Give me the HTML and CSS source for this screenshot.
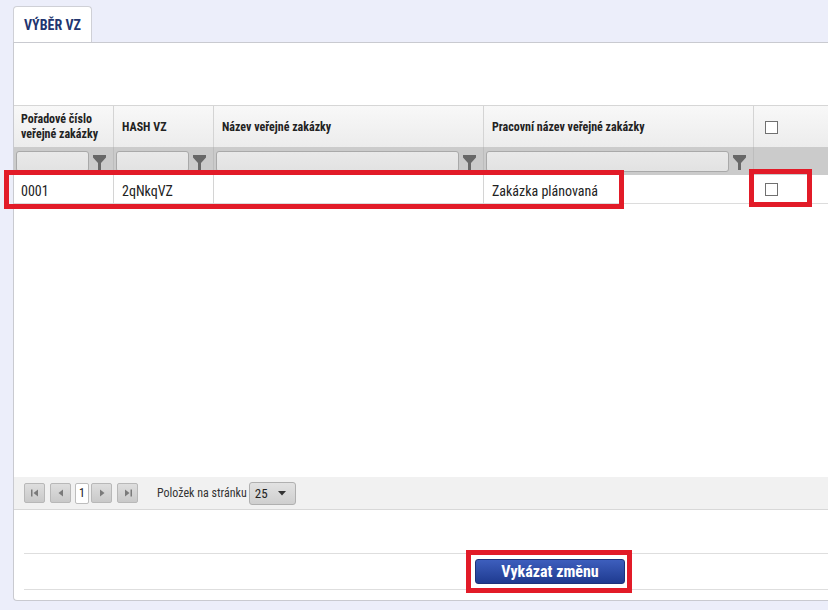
FILE: index.html
```html
<!DOCTYPE html>
<html lang="cs">
<head>
<meta charset="utf-8">
<title>Výběr VZ</title>
<link rel="stylesheet" href="styles.css">
</head>
<body>
<div class="page">
  <div class="tab">VÝBĚR VZ</div>
  <div class="panel">
    <div class="toolbar-space"></div>
    <div class="grid">
      <div class="cell head c-first">Pořadové číslo<br>veřejné zakázky</div>
      <div class="cell head">HASH VZ</div>
      <div class="cell head">Název veřejné zakázky</div>
      <div class="cell head">Pracovní název veřejné zakázky</div>
      <div class="cell head c-check"><span class="checkbox"></span></div>

      <div class="cell filter c-first"><span class="finput"></span><svg class="funnel" viewBox="0 0 13 15"><path d="M0 0H13V2.5L8 8V15H5V8L0 2.5Z"/></svg></div>
      <div class="cell filter"><span class="finput"></span><svg class="funnel" viewBox="0 0 13 15"><path d="M0 0H13V2.5L8 8V15H5V8L0 2.5Z"/></svg></div>
      <div class="cell filter"><span class="finput"></span><svg class="funnel" viewBox="0 0 13 15"><path d="M0 0H13V2.5L8 8V15H5V8L0 2.5Z"/></svg></div>
      <div class="cell filter"><span class="finput"></span><svg class="funnel" viewBox="0 0 13 15"><path d="M0 0H13V2.5L8 8V15H5V8L0 2.5Z"/></svg></div>
      <div class="cell filter c-check"></div>

      <div class="cell data c-first">0001</div>
      <div class="cell data">2qNkqVZ</div>
      <div class="cell data"></div>
      <div class="cell data">Zakázka plánovaná</div>
      <div class="cell data c-check"><span class="checkbox"></span></div>
    </div>
    <div class="grid-space"></div>
    <div class="pager">
      <span class="pbtn"><svg viewBox="0 0 10 10"><rect x="1" y="1.5" width="1.5" height="7"/><path d="M8 1.5V8.5L3.5 5Z"/></svg></span>
      <span class="pbtn"><svg viewBox="0 0 10 10"><path d="M7 1.5V8.5L2.5 5Z"/></svg></span>
      <span class="pnum">1</span>
      <span class="pbtn"><svg viewBox="0 0 10 10"><path d="M3 1.5V8.5L7.5 5Z"/></svg></span>
      <span class="pbtn pgap"><svg viewBox="0 0 10 10"><path d="M2 1.5V8.5L6.5 5Z"/><rect x="7.5" y="1.5" width="1.5" height="7"/></svg></span>
      <span class="plabel">Položek na stránku</span>
      <span class="pselect">25<svg viewBox="0 0 8 5"><path d="M0 0H8L4 4.5Z"/></svg></span>
    </div>
    <div class="actions">
      <button class="btn-primary" type="button">Vykázat změnu</button>
    </div>
  </div>

  <div class="mark mark-row"></div>
  <div class="mark mark-check"></div>
  <div class="mark mark-btn"></div>
</div>
</body>
</html>
```

FILE: styles.css
```css
html, body {
  margin: 0;
  padding: 0;
}
body {
  background: #eceefa;
  overflow: hidden;
  font-family: "Roboto Condensed", "Liberation Sans Narrow", "Arial Narrow", "DejaVu Sans Condensed", Roboto, sans-serif;
  color: #222;
}
.page {
  position: relative;
  width: 828px;
  height: 610px;
  padding: 6px 0 0 13px;
  box-sizing: border-box;
  overflow: hidden;
}
.tab {
  width: 79px;
  height: 36px;
  box-sizing: border-box;
  background: #fff;
  border: 1px solid #cfd0d6;
  border-bottom: none;
  border-radius: 4px 4px 0 0;
  color: #22356f;
  font-weight: bold;
  font-size: 14px;
  line-height: 36px;
  padding-left: 10px;
}
.panel {
  width: 1100px;
  background: #fff;
  border: 1px solid #c9cad0;
  border-right: none;
  border-radius: 0 0 0 4px;
  padding-bottom: 10px;
}
.toolbar-space {
  height: 62px;
}
.grid {
  display: grid;
  grid-template-columns: 99px 100px 270px 270px 120px;
  border-top: 1px solid #d6d6d6;
}
.cell {
  box-sizing: border-box;
  border-left: 1px solid #d4d4d4;
  display: flex;
  align-items: center;
  padding-left: 8px;
}
.c-first {
  border-left: none;
  padding-left: 7px;
}
.head {
  height: 41px;
  background: linear-gradient(#f8f8f8, #ececec);
  font-weight: bold;
  font-size: 12px;
  line-height: 15px;
  color: #222;
  padding-top: 1px;
}
.filter {
  height: 28px;
  background: #cbcbcb;
  border-left-color: #bdbdbd;
  padding: 0 7px 0 2px;
  gap: 4px;
}
.filter.c-first {
  padding-left: 2px;
}
.finput {
  flex: 1;
  height: 21px;
  box-sizing: border-box;
  border: 1px solid #a9a9a9;
  border-radius: 3px;
  background: linear-gradient(#e9e9e9, #e2e2e2);
}
.funnel {
  width: 13px;
  height: 15px;
  fill: #686868;
  flex: none;
  margin-top: 2px;
}
.data {
  height: 29px;
  border-bottom: 1px solid #dcdcdc;
  font-size: 14px;
  color: #222;
  background: #fff;
  padding-top: 3px;
}
.data.c-check {
  padding-top: 0;
}
.c-check {
  padding-left: 11px;
}
.checkbox {
  display: block;
  width: 13px;
  height: 13px;
  box-sizing: border-box;
  border: 1px solid #707070;
  background: #fff;
}
.grid-space {
  height: 273px;
}
.pager {
  height: 33px;
  box-sizing: border-box;
  background: #f1f1f1;
  border-bottom: 1px solid #d8d8d8;
  display: flex;
  align-items: center;
  padding-left: 10px;
}
.pbtn {
  width: 21px;
  height: 20px;
  box-sizing: border-box;
  border: 1px solid #b8b8b8;
  border-radius: 2px;
  background: linear-gradient(#dedede, #c9c9c9);
  display: flex;
  align-items: center;
  justify-content: center;
  margin-right: 5px;
}
.pbtn svg {
  width: 10px;
  height: 10px;
  fill: #7a7a7a;
}
.pnum {
  width: 14px;
  height: 21px;
  box-sizing: border-box;
  border: 1px solid #bdbdbd;
  border-radius: 2px;
  background: #fff;
  font-size: 12px;
  display: flex;
  align-items: center;
  justify-content: center;
  margin: 0 2px 0 -1px;
}
.pbtn.pgap {
  margin-right: 19px;
}
.plabel {
  font-size: 12px;
  color: #333;
  margin-right: 2px;
}
.pselect {
  width: 47px;
  height: 23px;
  box-sizing: border-box;
  border: 1px solid #b0b0b0;
  border-radius: 3px;
  background: linear-gradient(#e2e2e2, #cfcfcf);
  font-size: 13px;
  display: flex;
  align-items: center;
  justify-content: space-between;
  padding: 0 9px 0 5px;
}
.pselect svg {
  width: 8px;
  height: 5px;
  fill: #333;
}
.actions {
  margin: 43px 0 0 10px;
  border-top: 1px solid #dedede;
  border-bottom: 1px solid #dedede;
  height: 37px;
  box-sizing: border-box;
  display: flex;
  align-items: center;
  padding-left: 451px;
}
.btn-primary {
  width: 150px;
  height: 25px;
  border: 1px solid #1d327a;
  border-radius: 3px;
  background: linear-gradient(#3d5ebd, #1f3b90);
  color: #fff;
  font-family: inherit;
  font-weight: bold;
  font-size: 16px;
  padding: 0;
}
.mark {
  position: absolute;
  border: 5px solid #e21b28;
  box-sizing: border-box;
}
.mark-row {
  left: 4px;
  top: 170px;
  width: 620px;
  height: 39px;
}
.mark-check {
  left: 749px;
  top: 169px;
  width: 63px;
  height: 38px;
}
.mark-btn {
  left: 466px;
  top: 550px;
  width: 166px;
  height: 43px;
}
```
